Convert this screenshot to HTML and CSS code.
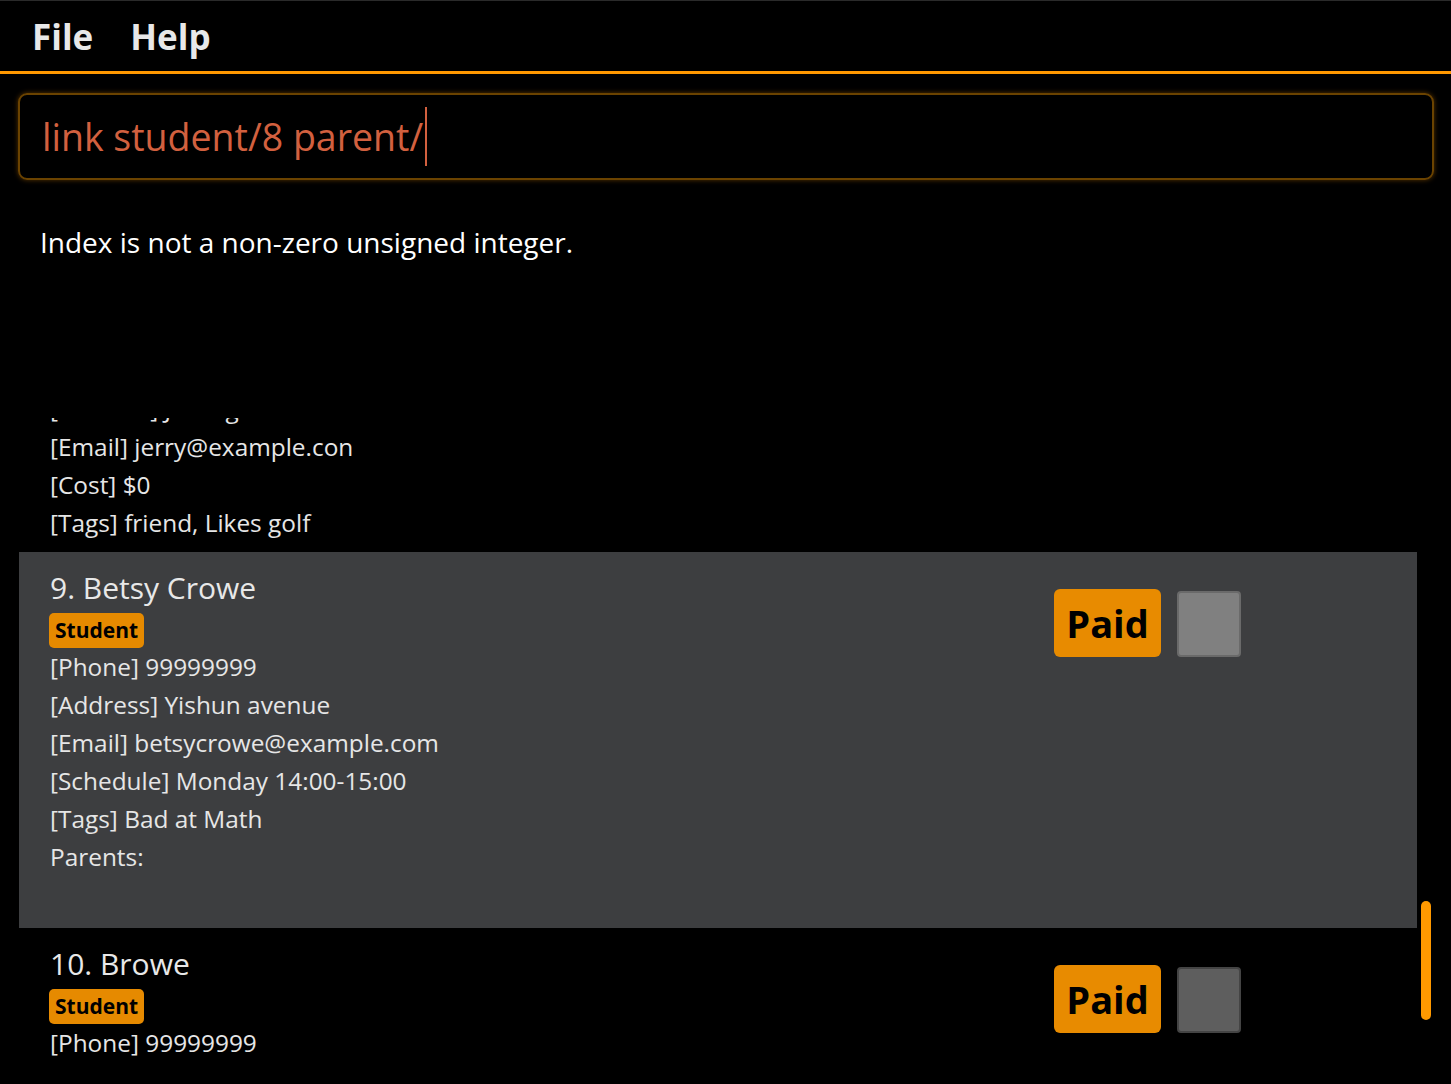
FILE: index.html
```html
<!DOCTYPE html>
<html>
<head>
<meta charset="utf-8">
<link rel="stylesheet" href="styles.css">
</head>
<body>
<div class="app">
  <div class="menubar">
    <span class="menu-item">File</span>
    <span class="menu-item">Help</span>
  </div>
  <div class="command-wrap">
    <div class="command-box">
      <span class="command-text">link student/8 parent/</span><span class="caret"></span>
    </div>
  </div>
  <div class="result">Index is not a non-zero unsigned integer.</div>
  <div class="list-row">
    <div class="list-viewport">
      <div class="list-inner">
        <div class="card partial">
          <div class="info">
            <div class="line">[Address] Jurong West Avenue</div>
            <div class="line">[Email] jerry@example.con</div>
            <div class="line">[Cost] $0</div>
            <div class="line">[Tags] friend, Likes golf</div>
          </div>
        </div>
        <div class="card selected">
          <div class="info">
            <div class="name">9. Betsy Crowe</div>
            <span class="tag">Student</span>
            <div class="line">[Phone] 99999999</div>
            <div class="line">[Address] Yishun avenue</div>
            <div class="line">[Email] betsycrowe@example.com</div>
            <div class="line">[Schedule] Monday 14:00-15:00</div>
            <div class="line">[Tags] Bad at Math</div>
            <div class="line">Parents:</div>
            <div class="parents-list"></div>
          </div>
          <div class="actions">
            <div class="paid">Paid</div>
            <div class="check"></div>
          </div>
        </div>
        <div class="card">
          <div class="info">
            <div class="name">10. Browe</div>
            <span class="tag">Student</span>
            <div class="line">[Phone] 99999999</div>
          </div>
          <div class="actions">
            <div class="paid">Paid</div>
            <div class="check"></div>
          </div>
        </div>
      </div>
    </div>
    <div class="scroll-track"><div class="scroll-thumb"></div></div>
  </div>
</div>
</body>
</html>
```
FILE: styles.css
```css
html, body {
  margin: 0;
  padding: 0;
  background: #000;
}
body {
  font-family: "Open Sans", "Noto Sans", sans-serif;
  color: #e6e6e6;
  width: 1451px;
  height: 1084px;
  overflow: hidden;
}
.app {
  display: flex;
  flex-direction: column;
  height: 1084px;
}
.menubar {
  height: 70px;
  border-top: 1px solid #2a2a2a;
  border-bottom: 3px solid #ff9800;
  display: flex;
  align-items: center;
  gap: 37px;
  padding-left: 32px;
  box-sizing: content-box;
}
.menu-item {
  font-weight: 700;
  font-size: 35px;
  color: #e8e8e8;
  line-height: 1;
}
.command-wrap {
  padding: 19px 17px 0 18px;
}
.command-box {
  height: 83px;
  border: 2px solid #6b4300;
  border-radius: 9px;
  box-shadow: 0 0 5px rgba(255, 150, 0, 0.35);
  display: flex;
  align-items: center;
  padding-left: 22px;
}
.command-text {
  font-size: 37.5px;
  color: #d2603f;
  line-height: 1;
}
.caret {
  display: inline-block;
  width: 2px;
  height: 59px;
  background: #d2603f;
  margin-left: 2px;
}
.result {
  height: 195px;
  padding: 43px 0 0 40px;
  font-size: 28px;
  line-height: 38px;
  color: #fff;
  box-sizing: content-box;
}
.list-row {
  display: flex;
  height: 666px;
  padding-left: 19px;
}
.list-viewport {
  width: 1398px;
  height: 666px;
  overflow: hidden;
}
.list-inner {
  margin-top: -28px;
}
.card {
  display: flex;
  padding: 16px 0 10px 31px;
}
.card.partial {
  padding-top: 0;
}
.card.selected {
  background: #3d3e40;
}
.info {
  flex: 1;
  display: flex;
  flex-direction: column;
  align-items: flex-start;
}
.name {
  font-size: 30px;
  line-height: 40px;
  color: #e8e8e8;
}
.tag {
  margin-top: 5px;
  height: 35px;
  background: #e68a00;
  color: #000;
  font-weight: 700;
  font-size: 21px;
  line-height: 35px;
  padding: 0 6px;
  border-radius: 5px;
  margin-left: -1px;
}
.line {
  font-size: 24.4px;
  line-height: 38px;
  color: #e6e6e6;
}
.parents-list {
  height: 42px;
}
.actions {
  display: flex;
  align-items: flex-start;
  gap: 16px;
  margin-top: 21px;
  margin-right: 176px;
}
.paid {
  width: 107px;
  height: 68px;
  background: #e88b00;
  border-radius: 6px;
  color: #000;
  font-weight: 700;
  font-size: 38px;
  display: flex;
  align-items: center;
  justify-content: center;
}
.check {
  width: 64px;
  height: 66px;
  margin-top: 2px;
  box-sizing: border-box;
  border: 2px solid #444;
  border-radius: 4px;
  background: #5e5e5e;
}
.selected .check {
  border-color: #6a6a6a;
  background: #808080;
}
.scroll-track {
  width: 34px;
  display: flex;
  justify-content: flex-start;
}
.scroll-thumb {
  width: 10px;
  height: 119px;
  margin-top: 483px;
  margin-left: 4px;
  background: #ff9900;
  border-radius: 5px;
}
```
